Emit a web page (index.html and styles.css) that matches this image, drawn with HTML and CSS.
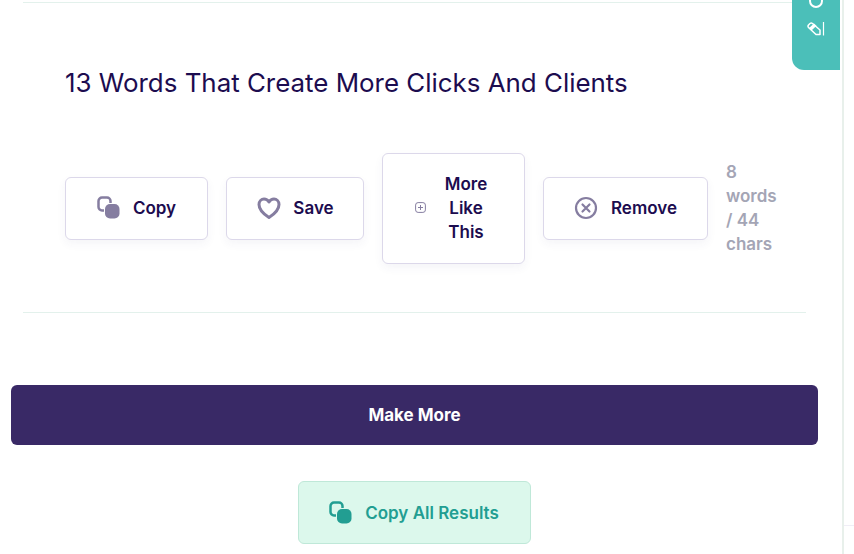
FILE: index.html
```html
<!DOCTYPE html>
<html lang="en">
<head>
    <meta charset="utf-8">
    <title>Results</title>
    <link rel="stylesheet" href="styles.css">
</head>
<body>

<div class="page">
    <div class="result">
        <h2 class="result-title">13 Words That Create More Clicks And Clients</h2>
        <div class="actions">
            <button class="btn btn-copy">
                <svg class="icon" width="24" height="24" viewBox="0 0 24 24"><path d="M7 14.500H5a3.500 3.500 0 0 1-3.500-3.500V5A3.500 3.500 0 0 1 5 1.500h5A3.500 3.500 0 0 1 13.500 5v2" fill="none" stroke="#857da0" stroke-width="2.500"/><rect x="8" y="8" width="14.500" height="14.500" rx="5" fill="#857da0"/></svg>
                Copy
            </button>
            <button class="btn btn-save">
                <svg class="icon" width="24" height="24" viewBox="0 0 24 24"><path d="M12 21.500C6.500 18 2 14 2 8.500 2 5 4.500 3 7 3c2 0 3.800 1 5 3 1.200-2 3-3 5-3 2.500 0 5 2 5 5.500 0 5.500-4.500 9.500-10 13z" fill="none" stroke="#857da0" stroke-width="3" stroke-linejoin="round"/></svg>
                Save
            </button>
            <button class="btn btn-more">
                <svg class="icon" width="11" height="11" viewBox="0 0 11 11"><rect x="0.600" y="0.600" width="9.800" height="9.800" rx="2.500" fill="none" stroke="#857da0"/><path d="M5.500 3v5M3 5.500h5" stroke="#857da0"/></svg>
                <span class="btn-label">More Like This</span>
            </button>
            <button class="btn btn-remove">
                <svg class="icon" width="24" height="24" viewBox="0 0 24 24"><circle cx="12" cy="12" r="10" fill="none" stroke="#857da0" stroke-width="2.200"/><path d="M8.500 8.500l7 7M15.500 8.500l-7 7" stroke="#857da0" stroke-width="2.200" stroke-linecap="round"/></svg>
                Remove
            </button>
            <div class="count">8 words / 44 chars</div>
        </div>
    </div>

    <button class="make-more">Make More</button>

    <div class="copy-all-row">
        <button class="copy-all">
            <svg class="icon" width="24" height="24" viewBox="0 0 24 24"><path d="M7 14.500H5a3.500 3.500 0 0 1-3.500-3.500V5A3.500 3.500 0 0 1 5 1.500h5A3.500 3.500 0 0 1 13.500 5v2" fill="none" stroke="#229e92" stroke-width="2.500"/><rect x="8" y="8" width="14.500" height="14.500" rx="5" fill="#229e92"/></svg>
            Copy All Results
        </button>
    </div>
</div>

<div class="side-tick"></div>

<div class="side-tab">
    <svg class="tab-ring" width="16" height="10" viewBox="0 0 16 10"><circle cx="8" cy="1" r="6" fill="none" stroke="#fff" stroke-width="2"/></svg>
    <svg class="tab-pencil" width="18" height="16" viewBox="0 0 18 16"><path d="M1.500 6.500a2 2 0 0 1 0-2.500L3 2.500a2 2 0 0 1 2.500 0l7.500 6.500v4.500H9z" fill="none" stroke="#fff" stroke-width="1.500" stroke-linejoin="round"/><path d="M2 7l5-4.500 2.500 2.200L4.500 9.500z" fill="#fff"/><path d="M16.500 1v13.500" stroke="#fff" stroke-width="1.200"/></svg>
</div>

</body>
</html>
```

FILE: styles.css
```css
* {
    margin: 0;
    padding: 0;
    box-sizing: border-box;
}

html,
body {
    height: 100%;
    overflow: hidden;
}

body {
    background-color: #fff;
    font-family: Inter, "Noto Sans", sans-serif;
    color: #1c0c4f;
}

button {
    font-family: inherit;
    cursor: pointer;
}

.page {
    width: 844px;
    height: 554px;
    padding: 2px 25px 0 11px;
    border-right: 2px solid #e8f0eb;
}

.result {
    margin: 0 0 0 12px;
    width: 783px;
    height: 311px;
    border-top: 1px solid #e3f1ec;
    border-bottom: 1px solid #e3f1ec;
    padding: 0 8px 0 42px;
}

.result-title {
    margin-top: 62px;
    font-size: 25.900px;
    line-height: 36px;
    font-weight: 400;
}

.actions {
    display: flex;
    align-items: center;
    gap: 18px;
    margin-top: 52px;
}

.btn {
    display: flex;
    align-items: center;
    justify-content: center;
    gap: 12px;
    height: 63px;
    padding-bottom: 2px;
    background-color: #fff;
    border: 1px solid #dcd8ea;
    border-radius: 6px;
    box-shadow: 0 4px 10px rgba(60, 50, 120, 0.05);
    color: #1c0c4f;
    font-size: 17px;
    font-weight: 600;
}

.btn-copy {
    width: 143px;
}

.btn-save {
    width: 138px;
    padding-left: 1px;
}

.btn-more {
    width: 143px;
    height: 111px;
    padding-left: 4px;
    gap: 10px;
}

.btn-label {
    width: 60px;
    line-height: 24px;
    text-align: center;
}

.btn-remove {
    width: 165px;
    gap: 13px;
}

.count {
    width: 56px;
    margin-top: -1px;
    color: #a4a5b5;
    font-size: 17px;
    font-weight: 600;
    line-height: 24px;
}

.make-more {
    display: block;
    width: 807px;
    height: 60px;
    margin-top: 72px;
    background-color: #392966;
    border: 0;
    border-radius: 6px;
    color: #fff;
    font-size: 17px;
    font-weight: 700;
}

.copy-all-row {
    display: flex;
    justify-content: center;
    margin-top: 36px;
}

.copy-all {
    display: flex;
    align-items: center;
    justify-content: center;
    gap: 12px;
    width: 233px;
    height: 63px;
    background-color: #dcf8ec;
    border: 1px solid #bfe8d8;
    border-radius: 6px;
    color: #229e92;
    font-size: 17px;
    font-weight: 600;
}

.side-tick {
    position: absolute;
    top: 525px;
    left: 844px;
    width: 10px;
    height: 1px;
    background-color: #f0eef6;
}

.side-tab {
    position: absolute;
    top: 0;
    left: 792px;
    width: 48px;
    height: 70px;
    background-color: #4bbfb9;
    border-radius: 0 0 0 12px;
}

.tab-ring {
    position: absolute;
    top: 0;
    left: 16px;
}

.tab-pencil {
    position: absolute;
    top: 21px;
    left: 15px;
}
```
